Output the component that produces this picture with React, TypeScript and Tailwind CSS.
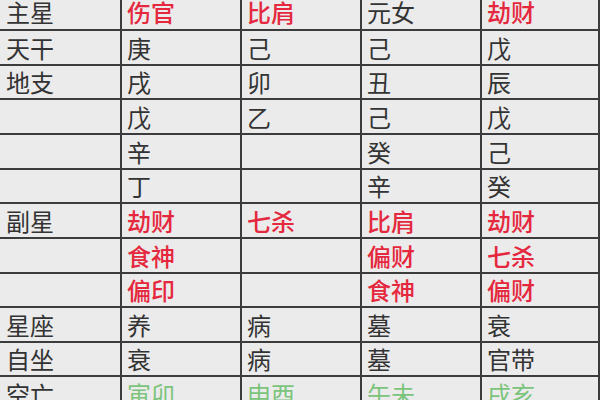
import React from "react";

type Cell = { t: string; c?: "r" | "g" };

const rows: Cell[][] = [
  [{ t: "主星" }, { t: "伤官", c: "r" }, { t: "比肩", c: "r" }, { t: "元女" }, { t: "劫财", c: "r" }],
  [{ t: "天干" }, { t: "庚" }, { t: "己" }, { t: "己" }, { t: "戊" }],
  [{ t: "地支" }, { t: "戌" }, { t: "卯" }, { t: "丑" }, { t: "辰" }],
  [{ t: "" }, { t: "戊" }, { t: "乙" }, { t: "己" }, { t: "戊" }],
  [{ t: "" }, { t: "辛" }, { t: "" }, { t: "癸" }, { t: "己" }],
  [{ t: "" }, { t: "丁" }, { t: "" }, { t: "辛" }, { t: "癸" }],
  [{ t: "副星" }, { t: "劫财", c: "r" }, { t: "七杀", c: "r" }, { t: "比肩", c: "r" }, { t: "劫财", c: "r" }],
  [{ t: "" }, { t: "食神", c: "r" }, { t: "" }, { t: "偏财", c: "r" }, { t: "七杀", c: "r" }],
  [{ t: "" }, { t: "偏印", c: "r" }, { t: "" }, { t: "食神", c: "r" }, { t: "偏财", c: "r" }],
  [{ t: "星座" }, { t: "养" }, { t: "病" }, { t: "墓" }, { t: "衰" }],
  [{ t: "自坐" }, { t: "衰" }, { t: "病" }, { t: "墓" }, { t: "官带" }],
  [{ t: "空亡" }, { t: "寅卯", c: "g" }, { t: "申酉", c: "g" }, { t: "午未", c: "g" }, { t: "戌亥", c: "g" }],
];

const heights = [
  "h-[36px]",
  "h-[35px]",
  "h-[34px]",
  "h-[35px]",
  "h-[35px]",
  "h-[34px]",
  "h-[35px]",
  "h-[35px]",
  "h-[34px]",
  "h-[35px]",
  "h-[34px]",
  "h-[35px]",
];

export default function App() {
  return (
    <div
      className="w-[600px] h-[400px] overflow-hidden bg-[#ebebeb]"
      style={{ fontFamily: '"Noto Sans CJK SC", "Noto Sans", sans-serif' }}
    >
      <div className="-mt-[5px] flex flex-col">
        {rows.map((row, i) => (
          <div
            key={i}
            className={`grid grid-cols-[122px_120px_120px_120px_118px] ${heights[i]} border-b-2 border-[#3c3c3c]`}
          >
            {row.map((cell, j) => (
              <div
                key={j}
                className={`flex items-center border-r-2 border-[#3c3c3c] ${j === 0 ? "pl-[6px]" : "pl-[5px]"}`}
              >
                <span
                  className={
                    cell.c === "r"
                      ? "text-[24px] leading-none font-medium text-[#e5283e]"
                      : cell.c === "g"
                      ? "text-[24px] leading-none text-[#7cc47c]"
                      : "text-[24px] leading-none font-normal text-[#333333]"
                  }
                >
                  {cell.t}
                </span>
              </div>
            ))}
          </div>
        ))}
      </div>
    </div>
  );
}
